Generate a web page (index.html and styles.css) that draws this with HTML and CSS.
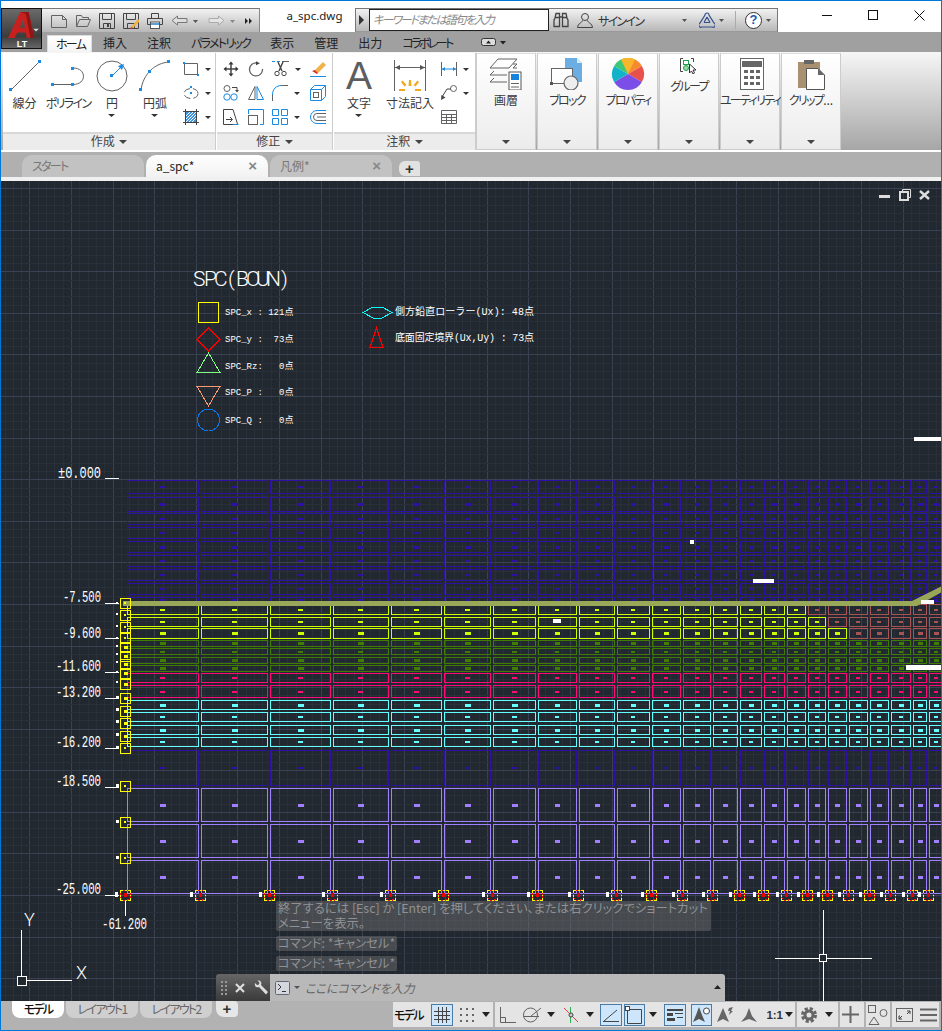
FILE: index.html
```html
<!DOCTYPE html>
<html lang="ja">
<head>
  <meta charset="UTF-8">
  <title>a_spc.dwg</title>
  <link rel="stylesheet" href="styles.css">
</head>
<body>
<div class="window">

  <!-- app button sits over title bar and tab row -->
  <div class="app-btn">
    <svg width="34" height="28" viewBox="0 0 34 30"><path fill-rule="evenodd" d="M1 29 L14 1 H23 L29 29 H21 L20 23 H11 L8 29 Z M13.500 18 H19 L17.500 8 Z" fill="#c8201e"/><path d="M14 1 H23 L29 29 H25 L20 3 Z" fill="#8e1513"/><path d="M28 19 h6 l-3 3 z" fill="#ddd"/></svg>
    <span class="app-lt">LT</span>
  </div>

  <header class="titlebar">
    <div class="qat">
      <svg width="16" height="16" viewBox="0 0 16 16"><path class="s" d="M.5 2.500 h11 l4 4 v8 h-15 z M11.500 2.500 v4 h4"/></svg>
      <svg width="16" height="16" viewBox="0 0 16 16"><path class="s" d="M1.500 13.500 v-11 h5 l1 2 h6 v2 M1.500 13.500 h11 l3 -7 h-11 z"/></svg>
      <svg width="16" height="16" viewBox="0 0 16 16"><path class="sd" d="M.5 .5 h15 v15 h-15 z M3.500 .5 v6 h9 v-6 M4.500 15.500 v-5 h7 v5"/><rect x="8" y="11" width="2" height="3" fill="#444"/></svg>
      <svg width="16" height="16" viewBox="0 0 16 16"><path class="sd" d="M.5 .5 h15 v15 h-15 z M3.500 .5 v6 h9 v-6 M4.500 15.500 v-5 h7 v5"/><path d="M8 14 L15 6 L17 8 L10 15 Z" fill="#f0b040"/><path d="M8 14 l2 1 l-3 1 z" fill="#e03020"/></svg>
      <svg width="16" height="16" viewBox="0 0 16 16"><path class="sd" d="M4.500 5.500 v-5 h7 v5 M.5 5.500 h15 v6 h-15 z"/><rect x="3.500" y="9" width="9" height="6.500" fill="#fff" stroke="#555"/><rect x="4" y="10" width="8" height="2" fill="#5aa0d8"/></svg>
      <svg width="17" height="16" viewBox="0 0 17 16"><path class="sl" d="M6.500 3 L1 7.500 L6.500 12 V9.500 H16 V5.500 H6.500 Z"/></svg>
      <svg class="caret-s" width="8" height="16" viewBox="0 0 8 16"><path d="M1 7 h5 l-2.500 3 z" fill="#555"/></svg>
      <svg width="17" height="16" viewBox="0 0 17 16"><path class="sx" d="M10.500 3 L16 7.500 L10.500 12 V9.500 H1 V5.500 H10.500 Z"/></svg>
      <svg class="caret-s" width="8" height="16" viewBox="0 0 8 16"><path d="M1 7 h5 l-2.500 3 z" fill="#888"/></svg>
      <svg width="8" height="16" viewBox="0 0 8 16"><path d="M0 5 l3 3 l-3 3 z M4 5 l3 3 l-3 3 z" fill="#222"/></svg>
    </div>
    <div class="doc-title">a_spc.dwg</div>
    <div class="info">
      <svg class="info-arrow" width="6" height="10" viewBox="0 0 6 10"><path d="M0 0 l5 5 l-5 5 z" fill="#333"/></svg>
      <div class="search">キーワードまたは語句を入力</div>
      <svg width="16" height="16" viewBox="0 0 16 16"><path class="sd" d="M2 6 L3 1.500 H6.500 V5 H9.500 V1.500 H13 L14 6 M1 14.500 V8 L2.500 5.500 H6.500 V14.500 Z M9.500 14.500 V5.500 H13.500 L15 8 V14.500 Z" stroke-width="1.300"/></svg>
      <svg class="ml-8" width="16" height="16" viewBox="0 0 16 16"><circle class="sd" cx="8" cy="5" r="3.500"/><path class="sd" d="M5.500 8.500 C5 11 1 11 .5 15.500 H15.500 C15 11 11 11 10.500 8.500"/></svg>
      <span class="signin kana">サインイン</span>
      <svg class="signin-caret" width="8" height="16" viewBox="0 0 8 16"><path d="M1 7 h5 l-2.500 3 z" fill="#555"/></svg>
      <svg class="ml-8" width="16" height="16" viewBox="0 0 16 16"><path d="M8 1 a2 2 0 0 1 2 2 L15 11 a2 2 0 0 1 -2 4 H3 a2 2 0 0 1 -2 -4 L6 3 a2 2 0 0 1 2 -2 Z M5 10.500 h6 M8 5 L5 10.500 M8 5 L11 10.500" fill="none" stroke="#33508c" stroke-width="1.200"/></svg>
      <svg class="caret-m" width="8" height="16" viewBox="0 0 8 16"><path d="M1 7 h5 l-2.500 3 z" fill="#555"/></svg>
      <span class="info-sep"></span>
      <span class="help">?</span>
      <svg class="caret-s" width="8" height="16" viewBox="0 0 8 16"><path d="M1 7 h5 l-2.500 3 z" fill="#555"/></svg>
    </div>
    <div class="win-btns">
      <svg width="11" height="11" viewBox="0 0 11 11"><path d="M0 5.500 h10" stroke="#111"/></svg>
      <svg width="11" height="11" viewBox="0 0 11 11"><rect x=".5" y=".5" width="9" height="9" fill="none" stroke="#111"/></svg>
      <svg width="11" height="11" viewBox="0 0 11 11"><path d="M.5 .5 L10.500 10.500 M10.500 .5 L.5 10.500" stroke="#111"/></svg>
    </div>
  </header>

  <nav class="ribbon-tabs">
    <span class="rtab active kana">ホーム</span>
    <span class="rtab">挿入</span>
    <span class="rtab">注釈</span>
    <span class="rtab kana">パラメトリック</span>
    <span class="rtab">表示</span>
    <span class="rtab">管理</span>
    <span class="rtab">出力</span>
    <span class="rtab kana-t">コラボレート</span>
    <svg class="rtab-toggle" width="26" height="10" viewBox="0 0 26 10"><rect x=".5" y="1.500" width="14" height="7" rx="2" fill="#ddd" stroke="#333"/><path d="M5 6.500 l2.500 -3 l2.500 3 z M19 4 h6 l-3 3.500 z" fill="#222"/></svg>
  </nav>

  <section class="ribbon">
    <div class="panel panel-draw">
      <div class="tools">
        <div class="tool w-43">
          <svg width="32" height="32" viewBox="0 0 32 32"><path class="s" d="M2 30 L30 2"/><rect class="f" x="0" y="28" width="3" height="3"/><rect class="f" x="29" y="0" width="3" height="3"/></svg>
          <span>線分</span>
        </div>
        <div class="tool w-44">
          <svg width="34" height="32" viewBox="0 0 34 32"><path class="s" d="M3 24.500 H22 C36 24.500 36 8 22 8"/><rect class="f" x="0" y="23" width="3" height="3"/><rect class="f" x="20" y="23" width="3" height="3"/><rect class="f" x="20" y="7" width="3" height="3"/></svg>
          <span class="kana">ポリライン</span>
        </div>
        <div class="tool w-44">
          <svg width="32" height="32" viewBox="0 0 32 32"><circle class="s" cx="16" cy="16" r="15"/><path class="b" d="M16 16 L25 7"/><path class="f" d="M28 4 L26 10 L22 6 Z"/><rect class="f" x="14" y="14" width="3" height="3"/></svg>
          <span>円</span>
          <svg class="tool-caret" width="8" height="6" viewBox="0 0 8 6"><path d="M0 1 h7 l-3.500 3 z" fill="#333"/></svg>
        </div>
        <div class="tool w-42">
          <svg width="32" height="32" viewBox="0 0 32 32"><path class="s" d="M2 30 C4 14 16 3 30 2"/><rect class="f" x="0" y="28" width="3" height="3"/><rect class="f" x="28" y="0" width="3" height="3"/><rect class="f" x="9" y="10" width="3" height="3"/></svg>
          <span>円弧</span>
          <svg class="tool-caret" width="8" height="6" viewBox="0 0 8 6"><path d="M0 1 h7 l-3.500 3 z" fill="#333"/></svg>
        </div>
        <div class="mini-col">
          <div class="mini">
            <svg width="16" height="16" viewBox="0 0 16 16"><path class="s" d="M1.500 2.500 h13 v11 h-13 z"/><rect class="f" x="0" y="1" width="2" height="2"/><rect class="f" x="14" y="13" width="2" height="2"/></svg>
            <svg class="mini-caret" width="7" height="16" viewBox="0 0 7 16"><path d="M0 7 h6 l-3 3 z" fill="#333"/></svg>
          </div>
          <div class="mini">
            <svg width="16" height="16" viewBox="0 0 16 16"><ellipse class="s" cx="8" cy="8.500" rx="7" ry="5" stroke-dasharray="7 3"/><rect class="f" x="7" y="1" width="2" height="2"/><rect class="f" x="7" y="7" width="2" height="2"/></svg>
            <svg class="mini-caret" width="7" height="16" viewBox="0 0 7 16"><path d="M0 7 h6 l-3 3 z" fill="#333"/></svg>
          </div>
          <div class="mini">
            <svg width="16" height="16" viewBox="0 0 16 16"><rect x="3" y="3" width="10" height="10" fill="#3d94e0"/><path d="M3 7 L7 3 M3 10 L10 3 M3 13 L13 3 M6 13 L13 6 M9 13 L13 9" stroke="#fff"/><path class="sd" d="M2.500 0 v16 M13.500 0 v16 M0 2.500 h16 M0 13.500 h16"/></svg>
            <svg class="mini-caret" width="7" height="16" viewBox="0 0 7 16"><path d="M0 7 h6 l-3 3 z" fill="#333"/></svg>
          </div>
        </div>
      </div>
      <div class="panel-foot">作成 <i class="foot-caret"></i></div>
    </div>

    <div class="panel panel-modify">
      <div class="modify-grid">
        <svg width="16" height="16" viewBox="0 0 16 16"><path d="M8 .5 l2.500 3 h-5 z M8 15.500 l2.500 -3 h-5 z M.5 8 l3 -2.500 v5 z M15.500 8 l-3 -2.500 v5 z" fill="#333"/><path class="sd" d="M8 3 v10 M3 8 h10" stroke-width="1.500"/></svg>
        <svg width="16" height="16" viewBox="0 0 16 16"><path class="s" stroke-width="1.300" d="M9 2 A6.500 6.500 0 1 0 14.500 8"/><path d="M8 .2 l4 2 l-4 2 z" fill="#444"/></svg>
        <div class="mini">
          <svg width="17" height="16" viewBox="0 0 17 16"><path class="b" stroke-dasharray="3 2" d="M0 .5 h9"/><path class="s" d="M10 .5 h7"/><path class="sd" stroke-width="1.400" d="M6 1 L10 10 M11 1 L7 10"/><circle class="sd" cx="5" cy="12.500" r="2.200"/><circle class="sd" cx="12" cy="12.500" r="2.200"/></svg>
          <svg class="mini-caret" width="7" height="16" viewBox="0 0 7 16"><path d="M0 7 h6 l-3 3 z" fill="#333"/></svg>
        </div>
        <svg width="16" height="16" viewBox="0 0 16 16"><path d="M5 9 L13 1 L16 4 L8 12 Z" fill="#f2b24a"/><path d="M2 10 l3 -1 l3 3 l-1 1 z" fill="#e02a20"/><path class="b" d="M0 15.500 h16"/></svg>

        <svg width="16" height="16" viewBox="0 0 16 16"><circle class="s" cx="4" cy="3.500" r="3"/><circle class="b" cx="4" cy="12" r="3.200"/><circle class="b" cx="11" cy="12" r="3.200"/><path class="sd" d="M9 2.500 h5 v3"/><path d="M12 5 h4 l-2 2.500 z" fill="#444"/></svg>
        <svg width="16" height="16" viewBox="0 0 16 16"><path class="s" d="M7 1.500 v13 h-6.500 z"/><path class="b" d="M9 1.500 v13 h6.500 z"/></svg>
        <div class="mini">
          <svg width="16" height="16" viewBox="0 0 16 16"><path class="s" d="M.5 16 V10"/><path class="b" d="M.5 10 C.5 4 4 .5 10 .5"/><path class="s" d="M10 .5 h6"/></svg>
          <svg class="mini-caret" width="7" height="16" viewBox="0 0 7 16"><path d="M0 7 h6 l-3 3 z" fill="#333"/></svg>
        </div>
        <svg width="16" height="16" viewBox="0 0 16 16"><path class="b" d="M.5 4.500 h11 v11 h-11 z M.5 4.500 l4 -4 h11 v11 l-4 4 M11.500 4.500 l4 -4"/><rect class="s" x="3.500" y="7.500" width="5" height="5"/></svg>

        <svg width="16" height="16" viewBox="0 0 16 16"><path class="sd" d="M10 15.500 H.5 V.5 H10 L14.500 15"/><path class="b" d="M10 15.500 H15.500"/><path class="sd" d="M3 10.500 H9 M7 8 l2.500 2.500 l-2.500 2.500"/></svg>
        <svg width="16" height="16" viewBox="0 0 16 16"><path class="b" d="M5 .5 H15.500 V15.500 H12 M.5 5 V.5 H5"/><rect class="s" x=".5" y="6.500" width="9" height="9"/></svg>
        <div class="mini">
          <svg width="16" height="16" viewBox="0 0 16 16"><path class="b" d="M.5 .5 h6 v6 h-6 z M9.500 .5 h6 v6 h-6 z M.5 9.500 h6 v6 h-6 z M9.500 9.500 h6 v6 h-6 z"/></svg>
          <svg class="mini-caret" width="7" height="16" viewBox="0 0 7 16"><path d="M0 7 h6 l-3 3 z" fill="#333"/></svg>
        </div>
        <svg width="16" height="16" viewBox="0 0 16 16"><path class="b" d="M16 1.500 H7 A6 6 0 0 0 7 14.500 H16"/><path class="s" d="M16 4.500 H7 A3 3 0 0 0 7 11.500 H16 M16 8 H7"/></svg>
      </div>
      <div class="panel-foot">修正 <i class="foot-caret"></i></div>
    </div>

    <div class="panel panel-note">
      <div class="tools">
        <div class="tool w-50 tool-a">
          <span class="big-a">A</span>
          <span>文字</span>
          <svg class="tool-caret" width="8" height="6" viewBox="0 0 8 6"><path d="M0 1 h7 l-3.500 3 z" fill="#333"/></svg>
        </div>
        <div class="tool w-52">
          <svg width="34" height="32" viewBox="0 0 34 32"><path class="s" d="M1.500 0 V31 M32.500 0 V31 M2 7.500 H32"/><path d="M2 7.500 l5 -2.500 v5 z M32 7.500 l-5 -2.500 v5 z" fill="#555"/><path d="M16 20 h2 l.5 6 h-3 z M8 22 l1.500 -1.500 l4 4.500 l-2 1.500 z M26 22 l-1.500 -1.500 l-4 4.500 l2 1.500 z M6 29 h6 v2 h-6 z M22 29 h6 v2 h-6 z" fill="#f2a81d"/></svg>
          <span>寸法記入</span>
        </div>
        <div class="mini-col mini-tight">
          <div class="mini">
            <svg width="16" height="16" viewBox="0 0 16 16"><path class="s" d="M.5 1 V15 M15.500 1 V15"/><path class="b" d="M1 8 H15"/><path class="f" d="M1 8 l3 -2 v4 z M15 8 l-3 -2 v4 z"/></svg>
            <svg class="mini-caret" width="7" height="16" viewBox="0 0 7 16"><path d="M0 7 h6 l-3 3 z" fill="#333"/></svg>
          </div>
          <div class="mini">
            <svg width="16" height="16" viewBox="0 0 16 16"><circle class="s" cx="12.500" cy="3.500" r="3"/><path class="sd" d="M10 4 H6 L1 12"/><path d="M0 15 l.5 -5 l4 2.500 z" fill="#444"/></svg>
            <svg class="mini-caret" width="7" height="16" viewBox="0 0 7 16"><path d="M0 7 h6 l-3 3 z" fill="#333"/></svg>
          </div>
          <div class="mini">
            <svg width="16" height="16" viewBox="0 0 16 16"><path class="s" d="M.5 1.500 h15 v13 h-15 z M.5 5.500 h15 M.5 8.500 h15 M.5 11.500 h15 M5.500 5.500 v9 M10.500 5.500 v9"/></svg>
          </div>
        </div>
      </div>
      <div class="panel-foot">注釈 <i class="foot-caret"></i></div>
    </div>

    <div class="slim">
      <svg class="slim-ic" width="34" height="32" viewBox="0 0 34 32"><path class="s" d="M1 10 L9 1 H28 L20 10 Z M1 17 L5 13 M1 17 H18 M1 24 L5 20 M1 24 H18 M24 6 h4 l-4 4 h4"/><rect x="20" y="14" width="12" height="18" fill="#fff" stroke="#555"/><rect x="22" y="16" width="8" height="6" fill="#1583dc"/><path class="s" d="M22 25.500 h8 M22 29 h8"/></svg>
      <span>画層</span>
      <i class="slim-caret"></i>
    </div>
    <div class="slim">
      <svg class="slim-ic" width="34" height="32" viewBox="0 0 34 32"><path d="M15 0 H27 L32 5 V24 H15 Z" fill="#6aaee4"/><path d="M27 0 L32 5 H27 Z" fill="#d8ebfa"/><rect x="1.500" y="10.500" width="21" height="15" fill="#fff" stroke="#666"/><rect x="0" y="24" width="3" height="3" fill="#555"/><circle cx="21" cy="25" r="7" fill="#eee" stroke="#666" stroke-width="1.200"/></svg>
      <span class="kana">ブロック</span>
      <i class="slim-caret"></i>
    </div>
    <div class="slim">
      <svg class="slim-ic" width="34" height="32" viewBox="0 0 34 32"><path d="M17 16 L17 0 A16 16 0 0 1 30.900 8 Z" fill="#f58b2e"/><path d="M17 16 L30.900 8 A16 16 0 0 1 30.900 24 Z" fill="#e8504c"/><path d="M17 16 L30.900 24 A16 16 0 0 1 17 32 Z" fill="#7c4ee8"/><path d="M17 16 L17 32 A16 16 0 0 1 3.100 24 Z" fill="#7c4ee8"/><path d="M17 16 L3.100 24 A16 16 0 0 1 3.100 8 Z" fill="#12b2c8"/><path d="M17 16 L3.100 8 A16 16 0 0 1 17 0 Z" fill="#3cc878"/><path d="M17 16 L10 1.600 A16 16 0 0 1 24 1.600 Z" fill="#f9b52c"/></svg>
      <span class="kana">プロパティ</span>
      <i class="slim-caret"></i>
    </div>
    <div class="slim slim-group">
      <svg class="slim-ic-s" width="18" height="16" viewBox="0 0 18 16"><path class="sd" d="M3 .5 H.5 V13.500 H3 M11 .5 H13.500 V4"/><rect x="3.500" y="2.500" width="5" height="4" fill="#fff" stroke="#22a050"/><circle cx="6" cy="10" r="2.500" fill="#9ad8a8" stroke="#22a050"/><path d="M9.500 6 V15 L11.500 13 L13 16 L14.500 15 L13 12 H16 Z" fill="#fff" stroke="#333"/></svg>
      <span class="kana">グループ</span>
      <i class="slim-caret"></i>
    </div>
    <div class="slim">
      <svg class="slim-ic" width="34" height="32" viewBox="0 0 34 32"><rect x="7.500" y=".5" width="23" height="31" fill="#fff" stroke="#666"/><rect x="9" y="3" width="20" height="6" fill="#666"/><path d="M11 12 h4 v3 h-4 z M17 12 h4 v3 h-4 z M23 12 h4 v3 h-4 z M11 18 h4 v3 h-4 z M17 18 h4 v3 h-4 z M23 18 h4 v3 h-4 z M11 24 h4 v3 h-4 z M17 24 h4 v3 h-4 z M23 24 h4 v3 h-4 z" fill="#666"/></svg>
      <span class="kana">ユーティリティ</span>
      <i class="slim-caret"></i>
    </div>
    <div class="slim">
      <svg class="slim-ic" width="34" height="32" viewBox="0 0 34 32"><rect x="4" y="4" width="22" height="26" fill="#a89070"/><rect x="10" y="2" width="10" height="4" fill="#666"/><path d="M12.500 10.500 H24 L30.500 17 V31.500 H12.500 Z" fill="#fff" stroke="#555"/><path d="M24 10.500 L30.500 17 H24 Z" fill="#666"/></svg>
      <span><span class="kana">クリップ</span>...</span>
      <i class="slim-caret"></i>
    </div>
  </section>

  <nav class="doc-tabs">
    <span class="dtab"><span class="kana">スタート</span></span>
    <span class="dtab current">a_spc*<b class="dtab-x">×</b></span>
    <span class="dtab">凡例*<b class="dtab-x">×</b></span>
    <span class="dtab-add">+</span>
  </nav>
  <div class="doc-strip"></div>

  <main class="canvas">
    <svg id="drawing" width="940" height="820" viewBox="1 181 940 820"></svg>

    <div class="vp-ctrl">
      <svg width="12" height="10" viewBox="0 0 12 10"><rect x="0" y="5" width="11" height="3" fill="#ddd"/></svg>
      <svg width="12" height="12" viewBox="0 0 12 12"><path d="M3.500 2.500 V.5 H11.500 V8.500 H9.500" fill="none" stroke="#ddd"/><rect x="1" y="3" width="8" height="8" fill="none" stroke="#ddd" stroke-width="2"/></svg>
      <svg width="11" height="10" viewBox="0 0 11 10"><path d="M1 1 L10 9 M10 1 L1 9" stroke="#ddd" stroke-width="2.400"/></svg>
    </div>

    <div class="cmd-history">
      <p class="cmd-line cmd-wide">終了するには [Esc] か [Enter] を押してください、または右クリックでショートカット<br>メニューを表示。</p>
      <p class="cmd-line">コマンド: *キャンセル*</p>
      <p class="cmd-line">コマンド: *キャンセル*</p>
    </div>

    <div class="cmd-bar">
      <div class="cmd-tools">
        <svg width="6" height="16" viewBox="0 0 6 16"><path d="M0 1 h2 v2 h-2 z M4 1 h2 v2 h-2 z M0 5 h2 v2 h-2 z M4 5 h2 v2 h-2 z M0 9 h2 v2 h-2 z M4 9 h2 v2 h-2 z M0 13 h2 v2 h-2 z M4 13 h2 v2 h-2 z" fill="#999"/></svg>
        <svg width="10" height="10" viewBox="0 0 10 10"><path d="M1 1 L9 9 M9 1 L1 9" stroke="#ddd" stroke-width="2.200"/></svg>
        <svg width="16" height="16" viewBox="0 0 16 16"><path d="M2 3 L4 5 L6 4.500 L6.500 2.500 L4.500 .5 C8 0 9 3 8 5 L15 12 L13 14.500 L6 7 C4 8 1 6.500 2 3 Z" fill="#ddd"/></svg>
      </div>
      <div class="cmd-input">
        <svg width="15" height="14" viewBox="0 0 15 14"><rect x=".5" y=".5" width="14" height="13" rx="1" fill="#d4d8dc" stroke="#667"/><path d="M3 3 L6 6 L3 9 M7 10.500 h4" fill="none" stroke="#334"/></svg>
        <svg width="7" height="6" viewBox="0 0 7 6"><path d="M0 1 h6 l-3 3 z" fill="#555"/></svg>
        <span class="cmd-placeholder">ここにコマンドを入力</span>
        <svg class="cmd-up" width="8" height="6" viewBox="0 0 8 6"><path d="M0 5 h7 l-3.500 -4 z" fill="#222"/></svg>
      </div>
    </div>
  </main>

  <footer class="bottom">
    <div class="layout-tabs">
      <span class="ltab current kana">モデル</span>
      <span class="ltab kana">レイアウト1</span>
      <span class="ltab kana">レイアウト2</span>
      <span class="ltab-add">+</span>
    </div>
    <div class="status">
      <div class="sgroup g1">
        <span class="s-model kana">モデル</span>
        <span class="sbtn on"><svg width="16" height="16" viewBox="0 0 16 16"><path class="sd" d="M4.500 0 v16 M8.500 0 v16 M12.500 0 v16 M0 4.500 h16 M0 8.500 h16 M0 12.500 h16"/></svg></span>
        <svg class="ml-6" width="15" height="15" viewBox="0 0 15 15"><path d="M1 1 h2 v2 h-2 z M7 1 h2 v2 h-2 z M13 1 h2 v2 h-2 z M1 7 h2 v2 h-2 z M7 7 h2 v2 h-2 z M13 7 h2 v2 h-2 z M1 13 h2 v2 h-2 z M7 13 h2 v2 h-2 z M13 13 h2 v2 h-2 z" fill="#666"/></svg>
        <i class="s-caret ml-8"></i>
      </div>
      <div class="sgroup g2">
        <svg width="16" height="16" viewBox="0 0 16 16"><path class="s" d="M.5 0 V15.500 H16 M.5 10.500 H5.500 V15.500"/></svg>
        <svg class="ml-7" width="19" height="16" viewBox="0 0 19 16"><circle class="s" cx="7.500" cy="8" r="7"/><path class="s" d="M7.500 9.500 L18 1 M.5 9.500 H16"/></svg>
        <i class="s-caret ml-5"></i>
        <svg class="ml-8" width="16" height="16" viewBox="0 0 16 16"><path d="M1 1 L15 15" stroke="#e04040"/><path d="M7.500 0 V16" stroke="#30b050"/><circle cx="8" cy="8" r="2" fill="#ccc" stroke="#444"/></svg>
        <i class="s-caret ml-7"></i>
        <span class="sbtn on ml-6"><svg width="16" height="14" viewBox="0 0 16 14"><path class="sd" d="M0 13.500 H16 M1 13 L14 2"/></svg></span>
        <span class="sbtn on ml-2"><svg width="18" height="18" viewBox="0 0 18 18"><path class="sd" d="M5 3.500 H16.500 V17.500 H2.500 V5"/><rect x=".5" y=".5" width="4" height="4" fill="#fff" stroke="#444"/></svg></span>
        <i class="s-caret ml-4"></i>
        <span class="sbtn on ml-7"><svg width="16" height="14" viewBox="0 0 16 14"><path d="M0 1 h16 v2 h-16 z M0 5 h6 v3 h-6 z M8 5 h8 v1 h-8 z M0 10 h8 v3 h-8 z M10 9 h6 v1 h-6 z" fill="#444"/></svg></span>
        <span class="sbtn on ml-5"><svg width="18" height="16" viewBox="0 0 18 16"><path d="M6 0 L9 8 L12 15 L6 12 L0 15 L3 8 Z" fill="#555"/><circle cx="13.500" cy="4" r="3" fill="#fff" stroke="#444"/></svg></span>
        <svg class="ml-5" width="18" height="16" viewBox="0 0 18 16"><path d="M6 1 L9 8 L12 15 L6 12 L0 15 L3 8 Z" fill="#666"/><path d="M12 1 l4 -1 l-2 4 l2 0 l-4 4 l1 -4 l-2 0 z" fill="#666"/></svg>
        <svg class="ml-5" width="18" height="16" viewBox="0 0 18 16"><path d="M9 1 L12 9 L17 15 L9 12 L1 15 L6 9 Z" fill="#666"/></svg>
        <span class="s-scale">1:1</span>
        <i class="s-caret ml-2"></i>
      </div>
      <div class="sgroup g3">
        <svg width="16" height="16" viewBox="0 0 16 16"><circle cx="8" cy="8" r="6.500" fill="none" stroke="#666" stroke-width="3" stroke-dasharray="3.100 2"/><circle cx="8" cy="8" r="4" fill="none" stroke="#666" stroke-width="3"/></svg>
        <i class="s-caret ml-8"></i>
      </div>
      <div class="sgroup g4">
        <svg width="17" height="17" viewBox="0 0 17 17"><path d="M0 8.500 h17 M8.500 0 v17" stroke="#666" stroke-width="2"/></svg>
      </div>
      <div class="sgroup g5">
        <svg width="20" height="20" viewBox="0 0 20 20"><rect class="s" x=".5" y=".5" width="7" height="7"/><circle class="s" cx="15.500" cy="8" r="3.500"/><path class="s" d="M1 19.500 L6 12 L11 19.500 Z"/></svg>
      </div>
      <div class="sgroup g6">
        <svg width="17" height="14" viewBox="0 0 17 14"><rect class="s" x=".5" y=".5" width="16" height="13"/><path d="M3 11 l3 -3 M11 6 l3 -3 M3 11 v-3 h1 M3 11 h3 M14 3 v3 M14 3 h-3" stroke="#444" fill="none"/></svg>
        <svg class="ml-7" width="17" height="14" viewBox="0 0 17 14"><path d="M0 1.500 h17 M0 7 h17 M0 12.500 h17" stroke="#666" stroke-width="2"/></svg>
      </div>
    </div>
  </footer>

</div>
<script src="drawing.js"></script>
</body>
</html>
```

FILE: styles.css
```css
* {
  box-sizing: border-box;
}

html, body {
  margin: 0;
  height: 100%;
  overflow: hidden;
}

body {
  font-family: "Noto Sans CJK JP", "Noto Sans", sans-serif;
  font-size: 12px;
  font-feature-settings: "palt";
  color: #3a3a3a;
}

svg {
  display: block;
  flex: none;
}

p {
  margin: 0;
}

i {
  font-style: normal;
}

.kana {
  letter-spacing: -1.7px;
}

.kana-t {
  letter-spacing: -2.6px;
}

.s, .b, .sd, .sl, .sx {
  fill: none;
}

.s { stroke: #626262; }
.sd { stroke: #444; }
.b { stroke: #1b8ae0; }
.f { fill: #1b8ae0; }
.sl { stroke: #777; fill: #ddd; }
.sx { stroke: #aaa; fill: #e4e4e4; }

.ml-2 { margin-left: 2px; }
.ml-4 { margin-left: 4px; }
.ml-5 { margin-left: 5px; }
.ml-6 { margin-left: 6px; }
.ml-7 { margin-left: 7px; }
.ml-8 { margin-left: 8px; }

.window {
  position: relative;
  width: 942px;
  height: 1031px;
  border: 1px solid #0078d7;
  display: flex;
  flex-direction: column;
  background: #fff;
}

/* title bar */
.titlebar {
  height: 31px;
  display: flex;
  align-items: flex-start;
  background: #fff;
}

.app-btn {
  position: absolute;
  left: 0;
  top: 7px;
  width: 41px;
  height: 41px;
  background: linear-gradient(#6a6a6a, #3c3c3c 70%, #666);
  border: 1px solid #111;
  padding: 2px 0 0 4px;
  z-index: 3;
}

.app-lt {
  display: block;
  width: 32px;
  text-align: center;
  color: #fff;
  font: bold 9px/10px "Liberation Sans", sans-serif;
}

.qat {
  margin: 7px 0 0 40px;
  width: 219px;
  height: 24px;
  display: flex;
  align-items: center;
  gap: 8px;
  padding: 0 0 0 10px;
  background: linear-gradient(#f2f2f2, #b8b8b8);
  border-top: 1px solid #777;
  border-right: 1px solid #888;
}

.caret-s {
  margin-left: -4px;
}

.caret-m {
  margin-left: 3px;
}

.doc-title {
  width: 95px;
  margin-top: 7px;
  padding-left: 14px;
  text-align: center;
  font-family: "Noto Sans", sans-serif;
  font-size: 11.500px;
  color: #222;
}

.info {
  margin-top: 7px;
  width: 423px;
  height: 24px;
  display: flex;
  align-items: center;
  background: linear-gradient(#f2f2f2, #b8b8b8);
  border: 1px solid #777;
  border-bottom-color: #999;
  padding-left: 1px;
}

.info-arrow {
  margin: 0 4px 0 2px;
}

.search {
  width: 180px;
  height: 22px;
  background: #fff;
  border: 1px solid #222;
  margin-right: 4px;
  padding-left: 3px;
  line-height: 19px;
  font-style: italic;
  font-size: 11.500px;
  letter-spacing: -1.700px;
  color: #888;
  white-space: nowrap;
}

.signin {
  margin-left: 5px;
  width: 83px;
  color: #333;
}

.signin-caret {
  margin-right: 2px;
}

.info-sep {
  width: 1px;
  height: 18px;
  background: #aaa;
  margin: 0 9px;
}

.help {
  width: 17px;
  height: 17px;
  border-radius: 50%;
  border: 1.500px solid #333;
  background: #fff;
  color: #2456b0;
  font: bold 13px/14px "Liberation Sans", sans-serif;
  text-align: center;
  margin-right: 7px;
}

.win-btns {
  margin: 9px 0 0 44px;
  display: flex;
  gap: 35px;
}

/* ribbon tabs */
.ribbon-tabs {
  height: 20px;
  background: #a0a0a0;
  display: flex;
  align-items: flex-end;
  padding-left: 46px;
  color: #222;
}

.rtab {
  padding: 0 10px;
  height: 17px;
  line-height: 16px;
  white-space: nowrap;
}

.rtab.active {
  width: 45px;
  background: linear-gradient(#fff, #f4f4f4);
  border: 1px solid #ddd;
  border-bottom: 0;
  padding: 0 8px;
  margin-right: 1px;
}

.rtab-toggle {
  margin: 0 0 5px 19px;
}

/* ribbon panels */
.ribbon {
  height: 100px;
  display: flex;
  padding: 1px 0 2px 2px;
  background: linear-gradient(#f6f6f6, #a6a6a6);
  border-bottom: 2px solid #fff;
  position: relative;
}

.panel {
  display: flex;
  flex-direction: column;
  background: #fff;
  height: 97px;
  border-right: 1px solid #ccc;
  box-shadow: 1px 0 0 #fff;
}

.panel-draw { width: 213px; margin-right: 1px; }
.panel-modify { width: 116px; margin-right: 1px; }
.panel-note { width: 142px; }

.panel-foot {
  height: 18px;
  margin: auto 0 0;
  background: #ececec;
  border-top: 2px solid #d8d8d8;
  text-align: center;
  line-height: 14px;
  color: #444;
}

.foot-caret, .slim-caret, .s-caret {
  display: inline-block;
  border-left: 4px solid transparent;
  border-right: 4px solid transparent;
  border-top: 4px solid #444;
}

.foot-caret {
  margin-left: 2px;
  vertical-align: 2px;
}

.tools {
  display: flex;
  padding-top: 7px;
  height: 79px;
}

.tool {
  display: flex;
  flex-direction: column;
  align-items: center;
}

.tool span {
  margin-top: 1px;
  line-height: 20px;
  white-space: nowrap;
}

.w-42 { width: 42px; }
.w-43 { width: 43px; }
.w-44 { width: 44px; }
.w-50 { width: 50px; }
.w-52 { width: 52px; }

.tool .big-a {
  font: 39px/32px "Liberation Sans", sans-serif;
  height: 32px;
  margin-top: 0;
  color: #5e5e5e;
}

.mini-col {
  margin-left: 7px;
  display: flex;
  flex-direction: column;
  gap: 8px;
  padding-top: 1px;
}

.mini-tight {
  margin-left: 5px;
}

.mini {
  display: flex;
  align-items: center;
  gap: 6px;
}

.modify-grid {
  display: grid;
  grid-template-columns: 25px 24px 38px 16px;
  grid-auto-rows: 16px;
  row-gap: 8px;
  padding: 8px 0 0 6px;
}

.slim {
  width: 60px;
  height: 97px;
  margin-right: 1px;
  background: linear-gradient(#fff, #ececec);
  border: 1px solid #ccc;
  border-top-color: #ddd;
  display: flex;
  flex-direction: column;
  align-items: center;
  position: relative;
  padding-top: 4px;
  white-space: nowrap;
}

.slim > span {
  margin-top: 1px;
  line-height: 18px;
}

.slim-group > span {
  margin-top: 3px;
}

.slim-caret {
  position: absolute;
  left: 25px;
  bottom: 5px;
}

/* document tabs */
.doc-tabs {
  height: 25px;
  background: #b0b0b0;
  display: flex;
  align-items: flex-end;
  padding-left: 21px;
  gap: 2px;
}

.dtab {
  position: relative;
  width: 122px;
  height: 22px;
  padding-left: 10px;
  line-height: 22px;
  background: #c2c2c2;
  border-radius: 10px 10px 0 0;
  color: #777;
}

.dtab.current {
  background: linear-gradient(#fff, #f2f2f2);
  color: #222;
}

.dtab-x {
  position: absolute;
  right: 11px;
  top: 0;
  font: bold 15px/22px "Liberation Sans", sans-serif;
  color: #888;
}

.dtab-add {
  width: 21px;
  height: 15px;
  margin-left: 5px;
  margin-bottom: 1px;
  background: #e2e2e2;
  border-radius: 6px 3px 0 6px;
  text-align: center;
  font: bold 15px/15px "Liberation Sans", sans-serif;
  color: #333;
}

.doc-strip {
  height: 4px;
  background: #f0f0f0;
}

/* model space */
.canvas {
  position: relative;
  height: 820px;
  background: #212830;
  overflow: hidden;
}

#drawing {
  position: absolute;
  left: 0;
  top: 0;
}

.line {
  stroke-width: 1;
  shape-rendering: crispEdges;
}

.dim {
  font-family: "Liberation Mono", "Noto Sans CJK JP", monospace;
  fill: #fff;
  font-size: 16px;
  font-feature-settings: normal;
}

.dim.note {
  font-size: 9px;
  white-space: pre;
}

.dim.note-jp {
  font-size: 10px;
  white-space: pre;
}

.sheet-title {
  font-family: "Roboto", sans-serif;
  font-weight: 300;
  font-size: 21px;
  fill: #fff;
}

.axis-label {
  font-family: "Roboto", sans-serif;
  font-weight: 300;
  font-size: 18px;
  fill: #fff;
}

.vp-ctrl {
  position: absolute;
  right: 11px;
  top: 8px;
  display: flex;
  align-items: center;
  gap: 8px;
}

.cmd-history {
  position: absolute;
  left: 275px;
  top: 720px;
  display: flex;
  flex-direction: column;
  align-items: flex-start;
  gap: 5px;
}

.cmd-line {
  padding: 0 2px;
  height: 15px;
  line-height: 15px;
  font-size: 12.350px;
  color: #8f9194;
  background: rgba(125, 125, 125, .42);
  border-radius: 2px;
  white-space: nowrap;
}

.cmd-wide {
  width: 435px;
  height: 30px;
}

.cmd-bar {
  position: absolute;
  left: 215px;
  top: 793px;
  width: 509px;
  height: 27px;
  display: flex;
  border-radius: 3px 3px 0 0;
  overflow: hidden;
}

.cmd-tools {
  width: 54px;
  background: linear-gradient(#666, #3a3a3a);
  display: flex;
  align-items: center;
  gap: 8px;
  padding-left: 5px;
}

.cmd-input {
  flex: 1;
  position: relative;
  background: #b9b9b9;
  display: flex;
  align-items: center;
  gap: 4px;
  padding-left: 5px;
}

.cmd-placeholder {
  font-style: italic;
  color: #666;
}

.cmd-up {
  position: absolute;
  right: 3px;
  top: 10px;
}

/* layout tabs and status bar */
.bottom {
  flex: 1;
  display: flex;
  justify-content: space-between;
  background: #b2b2b2;
  padding-left: 11px;
}

.layout-tabs {
  display: flex;
  height: 17px;
  gap: 2px;
}

.ltab {
  width: 72px;
  height: 17px;
  line-height: 16px;
  text-align: center;
  background: #cfcfcf;
  color: #666;
  border-radius: 0 0 8px 8px;
}

.ltab.current {
  background: #fff;
  color: #111;
  width: 52px;
  font-weight: 500;
}

.ltab-add {
  width: 22px;
  margin-left: 2px;
  height: 16px;
  background: #e6e6e6;
  border-radius: 0 4px 4px 8px;
  text-align: center;
  font: bold 15px/15px "Liberation Sans", sans-serif;
  color: #333;
}

.status {
  display: flex;
  gap: 2px;
  height: 25px;
  margin-top: 1px;
  margin-right: 2px;
}

.sgroup {
  display: flex;
  align-items: center;
  background: #e4e4e4;
  padding: 0 2px;
}

.g1 { width: 100px; padding-left: 1px; }
.g2 { width: 300px; padding-left: 5px; }
.g3 { width: 41px; padding-left: 4px; }
.g4 { width: 24px; }
.g5 { width: 24px; }
.g6 { width: 47px; padding-left: 4px; }

.s-model {
  width: 37px;
  font-weight: 500;
  color: #111;
}

.sbtn {
  display: flex;
  align-items: center;
  justify-content: center;
  width: 22px;
  height: 22px;
  background: #cde6fb;
  border: 1px solid #4d7ba3;
}

.s-caret {
  border-top-color: #222;
  border-top-width: 5px;
}

.s-scale {
  margin-left: 8px;
  font: bold 11.500px "Liberation Sans", sans-serif;
  color: #333;
}
```

FILE: drawing.js
```js
// column lines and rows of the boundary model, in page pixels
var cols = [126, 200, 269, 332, 390, 443, 492, 537, 578, 616, 651, 682, 712, 739, 763, 786, 807, 827, 848, 869, 890, 912, 928, 945];
var marks = [125, 200, 269, 332, 390, 443, 492, 537, 578, 616, 651, 682, 712, 739, 763, 786, 807, 827, 848, 869, 890, 912, 928];

var PUR = '#2f10a4', YEL = '#ccff00', GRN = '#3f7d00', PNK = '#ff0a78', CYN = '#66ffff', LIL = '#a080ff', BRN = '#a85454';

// top, bottom, colour, height of centre mark, x where the row turns brown
var rows = [
  [480, 493, PUR, 2], [497, 511, PUR, 3], [513, 524, PUR, 2], [527, 538, PUR, 2],
  [541, 552, PUR, 3], [555, 566, PUR, 2], [569, 580, PUR, 2], [583, 594, PUR, 2],
  [597, 601, PUR, 2],
  [604, 614, YEL, 2, 807], [617, 626, YEL, 2, 827], [628, 638, YEL, 3, 848],
  [640, 646, GRN, 3], [648, 654, GRN, 2], [657, 663, GRN, 3], [665, 671, GRN, 3],
  [673, 682, PNK, 2], [685, 697, PNK, 2],
  [700, 709, CYN, 3], [712, 721, CYN, 2], [725, 734, CYN, 3], [737, 746, CYN, 2],
  [750, 785, PUR, 2],
  [788, 821, LIL, 3], [824, 857, LIL, 3], [860, 893, LIL, 3]
];

var svg = document.getElementById('drawing');
var NS = 'http://www.w3.org/2000/svg';

function el(name, attrs, parent) {
  var e = document.createElementNS(NS, name);
  for (var k in attrs) e.setAttribute(k, attrs[k]);
  (parent || svg).appendChild(e);
  return e;
}

function hline(x1, x2, y, c) {
  el('line', { x1: x1, x2: x2, y1: y + .5, y2: y + .5, stroke: c, 'class': 'line' });
}

function vline(x, y1, y2, c) {
  el('line', { x1: x + .5, x2: x + .5, y1: y1, y2: y2, stroke: c, 'class': 'line' });
}

function box(x, y, w, h, c) {
  el('rect', { x: x, y: y, width: w, height: h, fill: c, 'class': 'line' });
}

function frame(x, y, w, h, c) {
  el('rect', { x: x + .5, y: y + .5, width: w, height: h, fill: 'none', stroke: c, 'class': 'line' });
}

function outline(name, attrs, c) {
  attrs.fill = 'none';
  attrs.stroke = c;
  attrs['class'] = 'line';
  return el(name, attrs);
}

function label(x, y, str, cls, len, adjust) {
  var t = el('text', { x: x, y: y, 'class': cls });
  t.textContent = str;
  if (len) {
    t.setAttribute('textLength', len);
    t.setAttribute('lengthAdjust', adjust || 'spacingAndGlyphs');
  }
  return t;
}

// grid
var i, j;
for (i = 0; i * 8.316 + 4.5 < 945; i++) {
  var gx = Math.round(4.5 + i * 8.316);
  vline(gx, 181, 1001, (i % 5 == 3) ? '#3a4150' : '#2a3039');
}
for (i = 0; 895 - i * 8.316 > 181; i++) {
  var gy = Math.round(895 - i * 8.316);
  hline(0, 945, gy, (i % 5 == 0) ? '#3a4150' : '#2a3039');
}
for (i = 1; i < 20; i++) {
  hline(0, 945, Math.round(895 + i * 8.316), (i % 5 == 0) ? '#3a4150' : '#2a3039');
}

// cells
rows.forEach(function (r) {
  for (j = 0; j < cols.length - 1; j++) {
    var left = cols[j] + 1, right = cols[j + 1] - 2;
    var c = (r[4] && cols[j] >= r[4]) ? BRN : r[2];
    frame(left, r[0], right - left, r[1] - r[0], c);
    var w = right - left > 40 ? 5 : 4;
    box(Math.round((left + right) / 2 - w / 2), Math.round((r[0] + r[1]) / 2 - r[3] / 2 + .5), w + (r[3] > 2 ? 1 : 0), r[3], c);
  }
});

// soil line with the slope at the right
box(123, 601, 790, 5, '#98a858');
el('polygon', { points: '912,601 942,586 942,592 917,606 912,606', fill: '#98a858' });

// stray white marks
box(753, 579, 21, 4, '#fff');
box(921, 600, 13, 4, '#fff');
box(906, 665, 35, 5, '#fff');
box(914, 437, 27, 4, '#fff');
box(690, 540, 4, 4, '#fff');
box(553, 619, 8, 4, '#fff');

// left boundary squares
[603, 615, 627, 638, 647, 656, 664, 673, 684, 698, 711, 723, 736, 748, 786, 822, 858].forEach(function (y, n) {
  frame(120, y - 5, 10, 10, '#ffff00');
  box(124, y - 1, n > 3 && n < 13 ? 4 : 2, n > 3 && n < 13 ? 3 : 2, '#ffff00');
});
[603, 614, 626, 638, 646, 654, 662, 672, 682, 697, 709, 721, 734, 747, 785, 821, 857].forEach(function (y, n) {
  var s = n > 8 ? 3 : 2;
  box(116, y - 1, s, s, '#fff');
});

// bottom supports
hline(125, 945, 893, LIL);
marks.forEach(function (x) {
  box(x - 10, 892, 3, 5, '#fff');
  el('rect', { x: x - 1, y: 893, width: 3, height: 4, fill: '#ee0000', 'class': 'line' });
  frame(x - 5, 890, 10, 10, '#ffff00');
  el('circle', { cx: x + .5, cy: 895.5, r: 5, fill: 'none', stroke: '#ff1010', 'stroke-dasharray': '2 2', 'class': 'line' });
});

// levels
var levels = [
  ['±0.000', 478, 478, 58, 43], ['-7.500', 603, 602, 63, 38], ['-9.600', 638, 638, 63, 38],
  ['-11.600', 672, 671, 56, 45], ['-13.200', 698, 697, 56, 45], ['-16.200', 748, 747, 56, 45],
  ['-18.500', 787, 786, 56, 45], ['-25.000', 895, 894, 56, 45]
];
levels.forEach(function (l) {
  hline(105, 119, l[1], '#fff');
  label(l[3], l[2], l[0], 'dim', l[4]);
});
vline(125, 901, 916, '#fff');
label(102, 929, '-61.200', 'dim', 45);

// legend, the title has wide gaps round its brackets
label('193 204 214 228 236 246 256 266 281', 286, 'SPC(BOUN)', 'sheet-title');
label(225, 315, 'SPC_x : 121点', 'dim note');
label(225, 342, 'SPC_y :  73点', 'dim note');
label(225, 369, 'SPC_Rz:   0点', 'dim note');
label(225, 395, 'SPC_P :   0点', 'dim note');
label(225, 423, 'SPC_Q :   0点', 'dim note');
label(395, 315, '側方鉛直ローラー(Ux): 48点', 'dim note-jp', 139, 'spacing');
label(395, 341, '底面固定境界(Ux,Uy) : 73点', 'dim note-jp', 139, 'spacing');

frame(198, 302, 20, 20, '#ffff00');
outline('polygon', { points: '208.5,328 220,339.5 208.5,351 197,339.5' }, '#ff0000');
outline('polygon', { points: '208.5,353 220,372.5 197,372.5' }, '#80ff80');
outline('polygon', { points: '197,386.5 220,386.5 208.5,406' }, '#ff9a70');
outline('circle', { cx: 208.5, cy: 420, r: 11 }, '#0a78e6');
outline('polygon', { points: '363,312.5 373,307 382,307 392,312.5 382,318 373,318' }, '#00ffff');
outline('polygon', { points: '376.5,328 383,347.5 370,347.5' }, '#ff0000');

// UCS icon
vline(21, 930, 980, '#fff');
hline(21, 72, 980, '#fff');
el('rect', { x: 18, y: 977, width: 8, height: 8, fill: '#212830' });
frame(17, 976, 9, 9, '#fff');
label(24, 926, 'Y', 'axis-label');
label(76, 979, 'X', 'axis-label');

// crosshair
hline(775, 872, 958, '#fff');
vline(823, 910, 1001, '#fff');
el('rect', { x: 819.5, y: 954.5, width: 7, height: 7, fill: '#212830', stroke: '#fff', 'class': 'line' });
```
